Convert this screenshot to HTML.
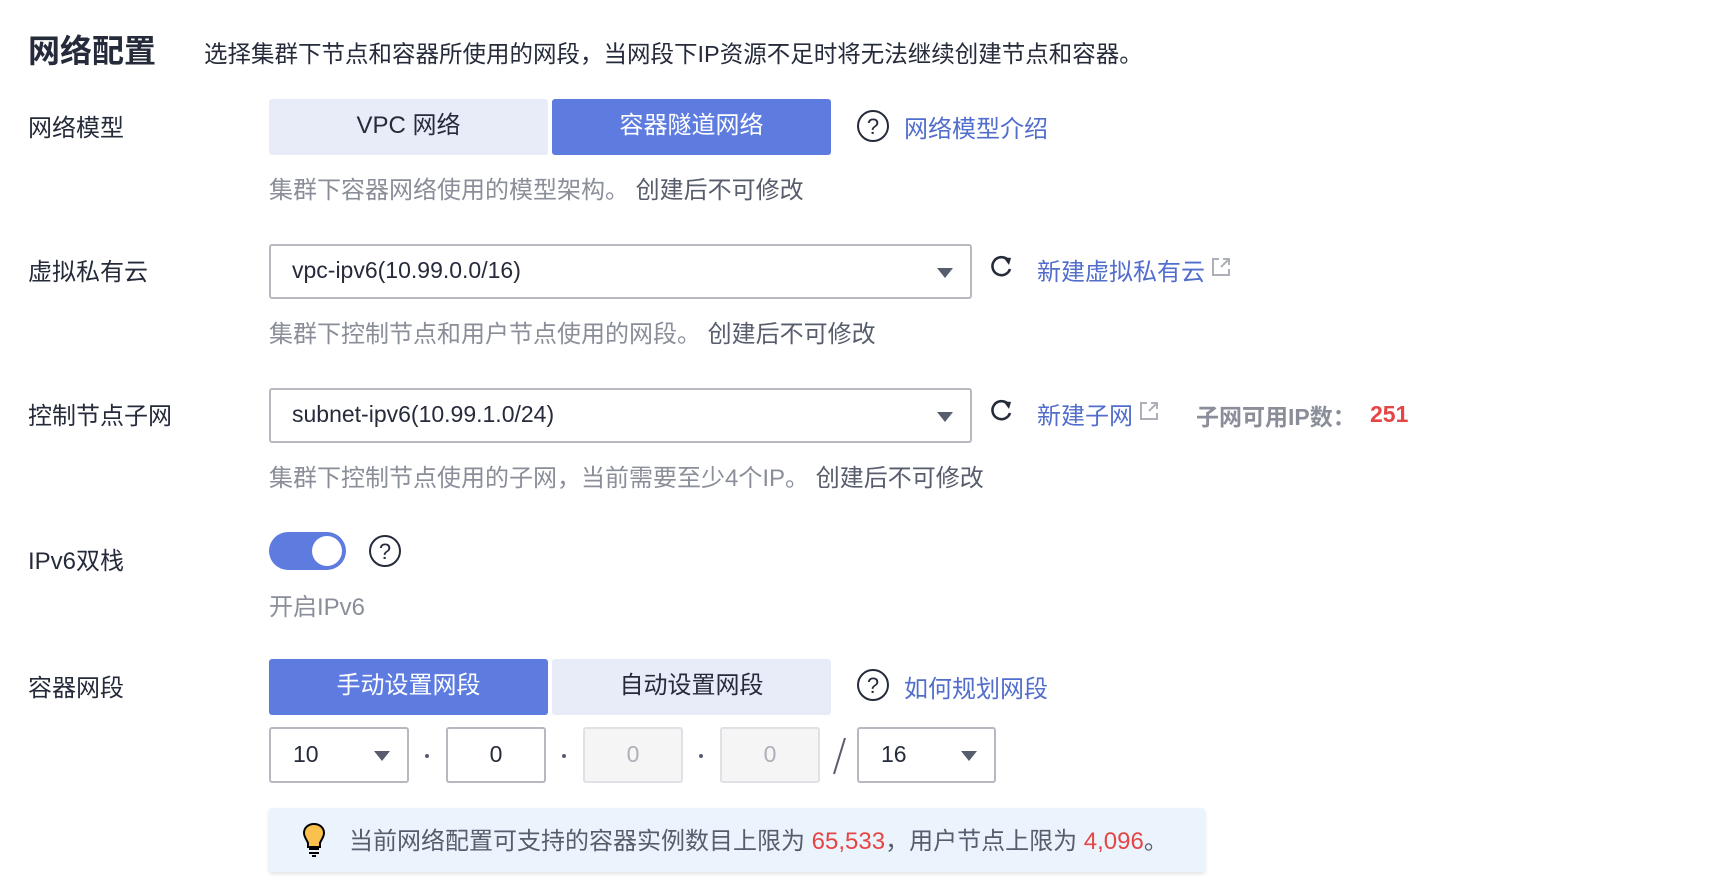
<!DOCTYPE html>
<html><head><meta charset="utf-8"><style>
*{margin:0;padding:0;box-sizing:border-box}
body{width:1720px;height:887px;background:#fff;font-family:"Liberation Sans","Noto Sans CJK SC",sans-serif;color:#252b3a;position:relative;overflow:hidden}
.a{position:absolute;white-space:nowrap}
.lbl{font-size:24px;color:#252b3a;left:28px}
.hint{font-size:24px;color:#8a8e99;left:269px}
.hint b{font-weight:normal;color:#575d6c}
.btn{position:absolute;height:56px;line-height:54px;text-align:center;font-size:24px;border-radius:3px}
.on{background:#5e7ce0;color:#fff}
.off{background:#e8ecf8;color:#252b3a}
.sel{position:absolute;border:2px solid #b6b9c0;border-radius:3px;background:#fff;font-size:23px;color:#252b3a}
.tri{position:absolute;width:0;height:0;border-left:8px solid transparent;border-right:8px solid transparent;border-top:10px solid #575d6c}
.link{color:#526ecc;font-size:24px}
.dot{position:absolute;width:4px;height:4px;border-radius:2px;background:#575d6c}
</style></head><body>
<div class="a" style="left:28px;top:26px;font-size:32px;font-weight:bold">网络配置</div>
<div class="a" style="left:204px;top:35px;font-size:23.5px;color:#252b3a">选择集群下节点和容器所使用的网段，当网段下IP资源不足时将无法继续创建节点和容器。</div>

<div class="a lbl" style="top:108px">网络模型</div>
<div class="btn off" style="left:269px;top:99px;width:279px">VPC 网络</div>
<div class="btn on" style="left:552px;top:99px;width:279px">容器隧道网络</div>
<svg class="a" style="left:856px;top:109px" width="34" height="34"><circle cx="17" cy="17" r="15" fill="none" stroke="#252b3a" stroke-width="2"/><text x="17" y="25" font-size="22" text-anchor="middle" fill="#252b3a" font-family="Liberation Sans">?</text></svg>
<div class="a link" style="left:904px;top:109px">网络模型介绍</div>
<div class="a hint" style="top:170px">集群下容器网络使用的模型架构。 <b>创建后不可修改</b></div>

<div class="a lbl" style="top:252px">虚拟私有云</div>
<div class="sel" style="left:269px;top:244px;width:703px;height:55px"><span class="a" style="left:21px;top:11px">vpc-ipv6(10.99.0.0/16)</span><div class="tri" style="left:666px;top:22px"></div></div>
<svg class="a" style="left:989px;top:254px" width="26" height="26"><path d="M19 6 A9 9 0 1 0 21 15" fill="none" stroke="#252b3a" stroke-width="2.6"/><path d="M14 3 L22 4 L20 11 Z" fill="#252b3a"/></svg>
<div class="a link" style="left:1037px;top:252px">新建虚拟私有云</div>
<svg class="a" style="left:1210px;top:256px" width="22" height="22"><path d="M9 3H3V19H19V13" fill="none" stroke="#adb0b8" stroke-width="2"/><path d="M11 11L19 3M13 3H19V9" fill="none" stroke="#adb0b8" stroke-width="2"/></svg>
<div class="a hint" style="top:314px">集群下控制节点和用户节点使用的网段。 <b>创建后不可修改</b></div>

<div class="a lbl" style="top:396px">控制节点子网</div>
<div class="sel" style="left:269px;top:388px;width:703px;height:55px"><span class="a" style="left:21px;top:11px">subnet-ipv6(10.99.1.0/24)</span><div class="tri" style="left:666px;top:22px"></div></div>
<svg class="a" style="left:989px;top:398px" width="26" height="26"><path d="M19 6 A9 9 0 1 0 21 15" fill="none" stroke="#252b3a" stroke-width="2.6"/><path d="M14 3 L22 4 L20 11 Z" fill="#252b3a"/></svg>
<div class="a link" style="left:1037px;top:396px">新建子网</div>
<svg class="a" style="left:1138px;top:400px" width="22" height="22"><path d="M9 3H3V19H19V13" fill="none" stroke="#adb0b8" stroke-width="2"/><path d="M11 11L19 3M13 3H19V9" fill="none" stroke="#adb0b8" stroke-width="2"/></svg>
<div class="a" style="left:1196px;top:398px;font-size:23px;font-weight:bold;color:#8a8e99">子网可用IP数：</div>
<div class="a" style="left:1370px;top:401px;font-size:23px;font-weight:bold;color:#e54545">251</div>
<div class="a hint" style="top:458px">集群下控制节点使用的子网，当前需要至少4个IP。 <b>创建后不可修改</b></div>

<div class="a lbl" style="top:541px">IPv6双栈</div>
<div class="a" style="left:269px;top:532px;width:77px;height:38px;border-radius:19px;background:#5e7ce0"><div style="position:absolute;right:4px;top:4px;width:30px;height:30px;border-radius:15px;background:#fff"></div></div>
<svg class="a" style="left:368px;top:534px" width="34" height="34"><circle cx="17" cy="17" r="15" fill="none" stroke="#252b3a" stroke-width="2"/><text x="17" y="25" font-size="22" text-anchor="middle" fill="#252b3a" font-family="Liberation Sans">?</text></svg>
<div class="a hint" style="top:587px">开启IPv6</div>

<div class="a lbl" style="top:668px">容器网段</div>
<div class="btn on" style="left:269px;top:659px;width:279px">手动设置网段</div>
<div class="btn off" style="left:552px;top:659px;width:279px">自动设置网段</div>
<svg class="a" style="left:856px;top:668px" width="34" height="34"><circle cx="17" cy="17" r="15" fill="none" stroke="#252b3a" stroke-width="2"/><text x="17" y="25" font-size="22" text-anchor="middle" fill="#252b3a" font-family="Liberation Sans">?</text></svg>
<div class="a link" style="left:904px;top:669px">如何规划网段</div>

<div class="sel" style="left:269px;top:727px;width:140px;height:56px"><span class="a" style="left:22px;top:12px">10</span><div class="tri" style="left:103px;top:22px"></div></div>
<div class="dot" style="left:425px;top:754px"></div>
<div class="sel" style="left:446px;top:727px;width:100px;height:56px;text-align:center;line-height:50px">0</div>
<div class="dot" style="left:562px;top:754px"></div>
<div class="sel" style="left:583px;top:727px;width:100px;height:56px;text-align:center;line-height:50px;background:#f5f5f6;border-color:#dfe1e6;color:#adb0b8">0</div>
<div class="dot" style="left:699px;top:754px"></div>
<div class="sel" style="left:720px;top:727px;width:100px;height:56px;text-align:center;line-height:50px;background:#f5f5f6;border-color:#dfe1e6;color:#adb0b8">0</div>
<svg class="a" style="left:827px;top:734px" width="24" height="44"><path d="M18 4L7 40" stroke="#575d6c" stroke-width="2"/></svg>
<div class="sel" style="left:857px;top:727px;width:139px;height:56px"><span class="a" style="left:22px;top:12px">16</span><div class="tri" style="left:102px;top:22px"></div></div>

<div class="a" style="left:269px;top:808px;width:936px;height:64px;background:#ebf4fd;border-radius:3px;box-shadow:0 2px 4px rgba(0,0,0,0.12)"></div>
<svg class="a" style="left:302px;top:822px" width="24" height="36"><path d="M12 2C6 2 2 6 2 11c0 4 3 7 4 10v4h12v-4c1-3 4-6 4-10 0-5-4-9-10-9z" fill="#fbc14e" stroke="#000" stroke-width="2"/><path d="M7 27h10M7 31h10M10 34h4" stroke="#000" stroke-width="2"/></svg>
<div class="a" style="left:349px;top:821px;font-size:24px;color:#575d6c">当前网络配置可支持的容器实例数目上限为 <span style="color:#e54545">65,533</span>，用户节点上限为 <span style="color:#e54545">4,096</span>。</div>
</body></html>
